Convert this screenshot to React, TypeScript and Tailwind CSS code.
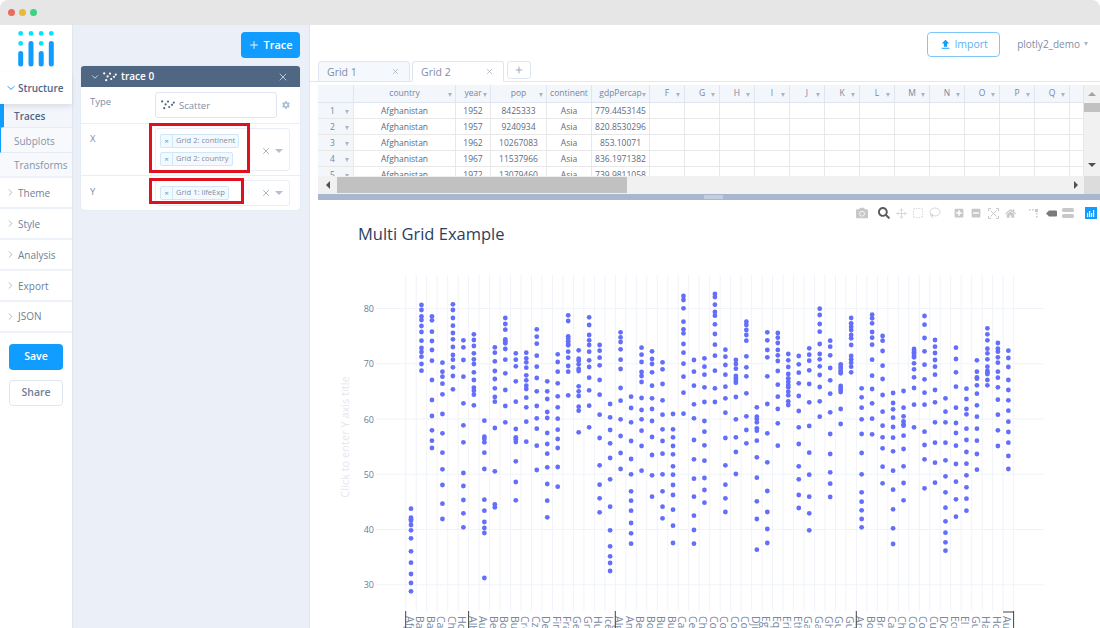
import { ChevronDown, ChevronRight, X, Plus, Move, SquareDashed, Lasso } from "lucide-react";
import { FaCamera, FaCog, FaHome, FaMinusSquare, FaPlusSquare, FaSearch } from "react-icons/fa";
import { MdFileUpload } from "react-icons/md";

const rows = [
  ["Afghanistan", "1952", "8425333", "Asia", "779.4453145"],
  ["Afghanistan", "1957", "9240934", "Asia", "820.8530296"],
  ["Afghanistan", "1962", "10267083", "Asia", "853.10071"],
  ["Afghanistan", "1967", "11537966", "Asia", "836.1971382"],
  ["Afghanistan", "1972", "13079460", "Asia", "739.9811058"],
];

const letters = ["F", "G", "H", "I", "J", "K", "L", "M", "N", "O", "P", "Q"];

const countries = [
  "Afghanistan", "Bahrain", "Bangladesh", "Cambodia", "China", "Hong Kong", "Albania", "Austria", "Belgium", "Bosnia",
  "Bulgaria", "Croatia", "Czech Republic", "Denmark", "Finland", "France", "Germany", "Greece", "Hungary", "Iceland",
  "Algeria", "Angola", "Benin", "Botswana", "Burkina Faso", "Burundi", "Cameroon", "Central African", "Chad", "Comoros",
  "Congo", "Congo", "Cote d'Ivoire", "Djibouti", "Egypt", "Equatorial", "Eritrea", "Ethiopia", "Gabon", "Gambia",
  "Ghana", "Guinea", "Guinea-Bissau", "Argentina", "Bolivia", "Brazil", "Canada", "Chile", "Colombia", "Costa Rica",
  "Cuba", "Dominican", "Ecuador", "El Salvador", "Guatemala", "Haiti", "Honduras", "Australia",
];

// y of each point per column, in 3x pixels below y=270
const points = [
  [716, 743, 748, 752, 765, 781, 805, 844, 878, 912, 939, 964],
  [105, 120, 139, 150, 168, 186, 212, 234, 246, 260, 282, 302],
  [139, 151, 185, 213, 240, 272, 330, 390, 438, 481, 512, 534],
  [278, 305, 320, 341, 373, 432, 490, 548, 598, 645, 701, 747],
  [103, 120, 144, 167, 189, 208, 231, 255, 269, 292, 318, 358],
  [211, 232, 270, 320, 400, 466, 517, 609, 648, 690, 730, 772],
  [193, 210, 228, 250, 268, 282, 307, 330, 353, 362, 374, 406],
  [452, 500, 507, 517, 548, 597, 689, 722, 756, 774, 789, 924],
  [232, 248, 274, 303, 327, 355, 381, 395, 474, 604, 703, 712],
  [144, 162, 179, 208, 214, 220, 237, 269, 310, 360, 408, 457],
  [250, 269, 289, 334, 395, 477, 502, 508, 516, 574, 636, 691],
  [248, 265, 277, 293, 316, 331, 347, 357, 383, 412, 455, 515],
  [178, 200, 221, 257, 290, 324, 364, 408, 445, 476, 527, 600],
  [334, 364, 387, 426, 444, 489, 522, 551, 592, 642, 692, 742],
  [253, 276, 305, 340, 379, 412, 446, 479, 507, 534, 591, 650],
  [136, 153, 199, 206, 214, 222, 226, 245, 263, 288, 305, 376],
  [241, 266, 272, 283, 297, 303, 349, 364, 378, 410, 422, 487],
  [142, 165, 195, 211, 225, 245, 271, 291, 323, 361, 407, 472],
  [225, 242, 263, 286, 330, 374, 434, 504, 586, 644, 685, 727],
  [402, 442, 480, 520, 564, 628, 710, 781, 829, 859, 879, 903],
  [187, 202, 216, 238, 269, 297, 354, 392, 448, 498, 549, 597],
  [380, 414, 457, 513, 567, 613, 664, 692, 722, 759, 790, 821],
  [233, 254, 276, 306, 318, 336, 384, 420, 448, 482, 528, 602],
  [244, 267, 282, 307, 347, 385, 417, 453, 501, 555, 616, 680],
  [277, 298, 342, 391, 434, 478, 513, 551, 613, 664, 710, 745],
  [432, 478, 502, 528, 553, 589, 614, 645, 675, 719, 767, 819],
  [78, 90, 115, 155, 178, 190, 222, 248, 281, 320, 368, 431],
  [270, 305, 347, 403, 445, 510, 568, 626, 680, 737, 780, 821],
  [265, 290, 314, 352, 396, 453, 485, 526, 572, 624, 660, 698],
  [72, 81, 104, 126, 137, 163, 192, 224, 257, 302, 355, 396],
  [239, 260, 285, 314, 350, 385, 428, 504, 586, 644, 685, 726],
  [270, 282, 296, 318, 325, 332, 338, 381, 448, 502, 546, 612],
  [155, 165, 180, 195, 212, 259, 292, 319, 370, 439, 480, 520],
  [412, 440, 447, 457, 475, 482, 512, 562, 623, 694, 747, 839],
  [187, 211, 240, 262, 319, 402, 490, 577, 663, 726, 777, 819],
  [189, 203, 219, 240, 256, 273, 303, 344, 380, 417, 460, 527],
  [252, 271, 291, 312, 325, 335, 345, 352, 365, 376, 394, 405],
  [258, 283, 308, 340, 378, 423, 472, 522, 589, 628, 675, 714],
  [235, 254, 272, 301, 342, 397, 468, 548, 614, 680, 730, 781],
  [116, 135, 162, 185, 222, 252, 268, 289, 315, 351, 394, 440],
  [212, 230, 256, 294, 331, 371, 427, 492, 552, 607, 641, 681],
  [283, 290, 297, 304, 310, 348, 354, 360, 366, 417, 462],
  [144, 160, 170, 180, 195, 205, 225, 258, 268, 278, 290, 307],
  [355, 382, 413, 448, 492, 549, 613, 667, 695, 721, 747, 772],
  [134, 145, 160, 186, 203, 224, 269, 317, 357, 400, 446, 493],
  [198, 212, 243, 287, 327, 375, 425, 467, 502, 535, 590, 640],
  [369, 399, 418, 443, 471, 503, 544, 602, 659, 718, 775, 822],
  [363, 413, 439, 454, 463, 467, 497, 537, 589, 639, 691],
  [237, 242, 247, 252, 257, 262, 280, 298, 322, 354, 404, 472],
  [138, 164, 204, 244, 284, 328, 368, 404, 485, 525, 568, 655],
  [210, 230, 249, 270, 290, 314, 360, 397, 457, 518, 578, 638],
  [385, 425, 457, 518, 571, 619, 667, 713, 754, 788, 817, 842],
  [233, 267, 307, 350, 413, 459, 489, 527, 582, 635, 688, 740],
  [356, 387, 417, 433, 476, 510, 546, 581, 616, 652, 686, 722],
  [271, 305, 322, 326, 346, 371, 406, 440, 476, 512, 552, 599],
  [175, 193, 211, 236, 250, 268, 290, 303, 308, 312, 330, 346],
  [219, 236, 245, 262, 278, 305, 323, 352, 389, 434, 481, 528],
  [242, 264, 291, 330, 360, 391, 422, 455, 486, 518, 558, 597],
];

const colX = (i: number) => 411 + i * 10.48;

const Caret = ({ className = "" }: { className?: string }) => (
  <div className={`w-0 h-0 border-x-[2.5px] border-t-[4px] border-x-transparent border-t-[#a9b5c6] ${className}`} />
);

const ScatterIcon = ({ color }: { color: string }) => (
  <svg width="14" height="10" viewBox="0 0 14 10" fill={color}>
    <circle cx="1.2" cy="1.4" r="1.1" />
    <circle cx="3.2" cy="8.2" r="1.1" />
    <circle cx="4.6" cy="4.4" r="1.1" />
    <circle cx="7" cy="1.6" r="1.1" />
    <circle cx="8.2" cy="7" r="1.1" />
    <circle cx="11" cy="4.8" r="1.1" />
    <circle cx="12.8" cy="2.6" r="1.1" />
  </svg>
);

const Tag = ({ label }: { label: string }) => (
  <div className="flex h-[14px] w-fit items-stretch border border-[#cfe8f9] bg-[#f3f9fe] rounded-[2px] text-[7.6px] text-[#7f8ea5]">
    <div className="w-[12px] border-r border-[#cfe8f9] flex items-center justify-center text-[#3f9de0] text-[8px]">×</div>
    <div className="px-[3px] flex items-center whitespace-nowrap">{label}</div>
  </div>
);

const NavRow = ({ label }: { label: string }) => (
  <div className="h-[31px] flex items-center border-b-2 border-[#eef2f9] text-[#6f7f97] text-[10px] font-medium pl-[5px] gap-[2px]">
    <ChevronRight size={11} strokeWidth={1.5} className="text-[#8d9bb0] -mt-[1px]" />
    <span className="pt-[2px]">{label}</span>
  </div>
);

const Logo = () => (
  <svg width="40" height="38" viewBox="16 31 40 38">
    {[20.7, 31, 41.2, 51.3].map((x) => (
      <circle key={x} cx={x} cy="33.4" r="2.4" fill="#00e5ff" />
    ))}
    <circle cx="20.7" cy="43.4" r="2.4" fill="#00e5ff" />
    <circle cx="41.2" cy="43.4" r="2.4" fill="#00e5ff" />
    <rect x="18.2" y="51" width="5" height="15.5" rx="2.5" fill="#119dff" />
    <rect x="28.5" y="41" width="5" height="25.5" rx="2.5" fill="#119dff" />
    <rect x="38.7" y="51" width="5" height="15.5" rx="2.5" fill="#119dff" />
    <rect x="48.8" y="41" width="5" height="25.5" rx="2.5" fill="#119dff" />
  </svg>
);

const Sidebar = () => (
  <div className="w-[73px] shrink-0 bg-white border-r border-[#dfe6f2] flex flex-col">
    <div className="h-[47px] pt-[6px] pl-[16px]">
      <Logo />
    </div>
    <div className="h-[32px] flex items-center text-[#506784] text-[10px] font-semibold pl-[5px] gap-[1px] shadow-[0_3px_5px_rgba(80,103,132,0.15)] z-10">
      <ChevronDown size={12} strokeWidth={2} className="text-[#119dff]" />
      Structure
    </div>
    <div className="h-[24px] flex items-center bg-[#f3f6fb] border-l-[4px] border-[#119dff] border-b border-b-[#e6ecf5] pl-[10px] pt-[2px] text-[10px] font-semibold text-[#506784]">
      Traces
    </div>
    <div className="h-[25px] flex items-center bg-[#f7f9fc] border-l border-[#119dff] border-b border-b-[#e6ecf5] pl-[13px] pt-[2px] text-[10px] text-[#8594aa]">
      Subplots
    </div>
    <div className="h-[25px] flex items-center bg-[#f7f9fc] border-b-2 border-[#eef2f9] pl-[14px] pt-[2px] text-[10px] text-[#8594aa]">
      Transforms
    </div>
    <NavRow label="Theme" />
    <NavRow label="Style" />
    <NavRow label="Analysis" />
    <NavRow label="Export" />
    <div className="h-[31px] flex items-center border-b-2 border-[#eef2f9] text-[#6f7f97] text-[10px] font-medium pl-[5px] gap-[2px]">
      <ChevronRight size={11} strokeWidth={1.5} className="text-[#8d9bb0]" />
      JSON
    </div>
    <button className="mt-[11px] ml-[9px] w-[54px] h-[26px] rounded-[4px] bg-[#119dff] text-white text-[10.5px] font-semibold pb-[1px]">
      Save
    </button>
    <button className="mt-[10px] ml-[9px] w-[54px] h-[26px] rounded-[4px] bg-white border border-[#dfe6f2] text-[#6f7f97] text-[10.5px] font-semibold">
      Share
    </button>
  </div>
);

const ClearCaret = () => (
  <div className="flex items-center gap-[4px]">
    <X size={10} strokeWidth={1.5} className="text-[#7d8ba0]" />
    <div className="w-0 h-0 border-x-[4px] border-t-[4px] border-x-transparent border-t-[#b4bfcf]" />
  </div>
);

const TracePanel = () => (
  <div className="w-[237px] shrink-0 bg-[#ebf0f8] border-r border-[#dfe6f2] pt-[7px] pl-[8px] pr-[9px]">
    <div className="flex justify-end">
      <button className="w-[59px] h-[26px] rounded-[4px] bg-[#119dff] text-white text-[11px] font-semibold flex items-center justify-center gap-[3px]">
        <Plus size={12} strokeWidth={1.75} />
        Trace
      </button>
    </div>
    <div className="mt-[8px] rounded-[3px] bg-white shadow-[0_0_1px_rgba(80,103,132,0.3)]">
      <div className="h-[21px] bg-[#506784] rounded-t-[3px] flex items-center pl-[9px] pr-[11px] text-white text-[10px] font-semibold">
        <ChevronDown size={10} strokeWidth={2} className="text-[#dfe6f2]" />
        <div className="ml-[3px] mr-[4px]">
          <ScatterIcon color="#ffffff" />
        </div>
        trace 0
        <X size={12} strokeWidth={1.5} className="ml-auto text-[#dfe6f2]" />
      </div>
      <div className="h-[37px] border-b border-[#e9eef6] flex items-center">
        <div className="w-[74px] pl-[9px] text-[9.5px] text-[#7f8ea5] self-start pt-[8px]">Type</div>
        <div className="w-[122px] h-[26px] border border-[#dfe6f2] rounded-[3px] flex items-center pl-[5px] gap-[4px] text-[9.5px] text-[#7f8ea5]">
          <ScatterIcon color="#506784" />
          <span className="pt-[2px]">Scatter</span>
        </div>
        <FaCog size={8} className="ml-[5px] text-[#a9bdd6]" />
      </div>
      <div className="h-[52px] border-b border-[#e9eef6] flex items-center">
        <div className="w-[74px] pl-[9px] text-[9.5px] text-[#7f8ea5] self-start pt-[8px]">X</div>
        <div className="relative w-[135px] h-[43px] border border-[#e9eef6] rounded-[3px] flex items-center pl-[4px]">
          <div className="flex flex-col gap-[4px]">
            <Tag label="Grid 2: continent" />
            <Tag label="Grid 2: country" />
          </div>
          <div className="ml-auto mr-[6px] mt-[2px]">
            <ClearCaret />
          </div>
          <div className="absolute left-[-7px] top-[-6px] w-[101px] h-[50px] border-[3px] border-[#e0111f]" />
        </div>
      </div>
      <div className="h-[34px] flex items-center">
        <div className="w-[74px] pl-[9px] text-[9.5px] text-[#7f8ea5] self-start pt-[9px]">Y</div>
        <div className="relative w-[135px] h-[26px] border border-[#e9eef6] rounded-[3px] flex items-center pl-[4px]">
          <Tag label="Grid 1: lifeExp" />
          <div className="ml-auto mr-[6px]">
            <ClearCaret />
          </div>
          <div className="absolute left-[-7px] top-[-3px] w-[95px] h-[26px] border-[3px] border-[#e0111f]" />
        </div>
      </div>
    </div>
  </div>
);

const GridTab = ({ label, active }: { label: string; active?: boolean }) => (
  <div
    className={`w-[92px] h-[21px] border border-[#dfe6f2] rounded-t-[3px] flex items-center justify-between pl-[8px] pr-[9px] text-[10.5px] text-[#7f8ea5] ${
      active ? "bg-white border-b-white" : "bg-[#f5f8fc]"
    }`}
  >
    <span className="pt-[2px]">{label}</span>
    <X size={9} strokeWidth={1.5} className="text-[#8d9bb0]" />
  </div>
);

const headCell = "relative h-[18px] flex items-center justify-center bg-[#f3f6fb] border-r border-b border-[#dfe6f2] text-[8.5px] text-[#7687a0]";
const bodyCell = "h-[16px] pt-[1px] flex items-center justify-center border-r border-b border-[#e8e8e8] text-[8.5px] text-[#5c6a7f] whitespace-nowrap";

const Table = () => (
  <div className="ml-[8px] h-[118px] shrink-0 flex flex-col">
    <div className="flex h-[91px] mt-[3px]">
      <div className="w-[766px] h-[91px] overflow-hidden">
        <div className="grid grid-cols-[36px_102px_35px_56px_45px_58px_repeat(12,35px)_14px]">
          <div className={headCell} />
          {["country", "year", "pop", "continent", "gdpPercap"].map((h) => (
            <div key={h} className={headCell}>
              {h}
              {h !== "continent" && <Caret className="absolute right-[3px] top-[8px]" />}
            </div>
          ))}
          {letters.map((l) => (
            <div key={l} className={headCell}>
              {l}
              <Caret className="absolute right-[4px] top-[8px]" />
            </div>
          ))}
          <div className={headCell} />
          {rows.map((r, i) => (
            <div key={i} className="contents">
              <div className={`${bodyCell} relative bg-[#f3f6fb] text-[#7687a0] pr-[6px]`}>
                {i + 1}
                <Caret className="absolute right-[4px] top-[7px]" />
              </div>
              {r.map((c, j) => (
                <div key={j} className={bodyCell}>
                  {c}
                </div>
              ))}
              {letters.map((l) => (
                <div key={l} className={bodyCell} />
              ))}
              <div className={bodyCell} />
            </div>
          ))}
        </div>
      </div>
      <div className="w-[16px] h-[91px] bg-[#f1f1f1] flex flex-col items-center">
        <div className="h-[18px] flex items-center">
          <div className="w-0 h-0 border-x-[4px] border-b-[4px] border-x-transparent border-b-[#a3a3a3]" />
        </div>
        <div className="w-full h-[9px] bg-[#c1c1c1]" />
        <div className="mt-[51px] w-0 h-0 border-x-[4px] border-t-[4px] border-x-transparent border-t-[#505050]" />
      </div>
    </div>
    <div className="flex h-[18px] bg-[#f1f1f1] items-center">
      <div className="w-[19px] flex justify-center">
        <div className="w-0 h-0 border-y-[4px] border-r-[4px] border-y-transparent border-r-[#505050]" />
      </div>
      <div className="w-[290px] h-[16px] bg-[#c1c1c1]" />
      <div className="w-[457px] flex justify-end pr-[6px]">
        <div className="w-0 h-0 border-y-[4px] border-l-[4px] border-y-transparent border-l-[#505050]" />
      </div>
      <div className="w-[16px] h-full bg-[#dcdcdc]" />
    </div>
    <div className="h-[6px] bg-[#a8b7cf] flex justify-center items-center shrink-0">
      <div className="ml-[9px] w-[19px] h-[4px] bg-[#c3cede]" />
    </div>
  </div>
);

const Modebar = () => (
  <div className="absolute top-[7px] right-[3px] flex items-center text-[#c8c8c8]">
    <FaCamera size={12} />
    <FaSearch size={12} className="ml-[10px] text-[#5a5a5a]" />
    <Move size={11} strokeWidth={1.5} className="ml-[6px]" />
    <SquareDashed size={12} strokeWidth={1.5} className="ml-[5px]" />
    <Lasso size={12} strokeWidth={1.5} className="ml-[5px]" />
    <FaPlusSquare size={10} className="ml-[13px]" />
    <FaMinusSquare size={10} className="ml-[7px]" />
    <svg width="11" height="11" viewBox="0 0 11 11" fill="none" stroke="currentColor" className="ml-[7px]">
      <path d="M0.5 3V0.5H3M8 0.5H10.5V3M10.5 8V10.5H8M3 10.5H0.5V8M2.5 2.5L8.5 8.5M8.5 2.5L2.5 8.5" />
    </svg>
    <FaHome size={11} className="ml-[6px]" />
    <svg width="10" height="10" viewBox="0 0 10 10" fill="currentColor" className="ml-[13px]">
      <rect x="0" y="1" width="1.5" height="1.5" />
      <rect x="3" y="1" width="1.5" height="1.5" />
      <rect x="6" y="1" width="3" height="3" />
      <rect x="7" y="5" width="1.5" height="1.5" />
      <rect x="7" y="8" width="1.5" height="1.5" />
    </svg>
    <svg width="11" height="7" viewBox="0 0 11 7" fill="#7a7a7a" className="ml-[7px]">
      <path d="M0 3.5L3 0.5H10a1 1 0 0 1 1 1V5.5a1 1 0 0 1-1 1H3Z" />
    </svg>
    <svg width="12" height="10" viewBox="0 0 12 10" fill="currentColor" className="ml-[5px]">
      <rect x="0" y="0" width="12" height="4" rx="1.5" />
      <rect x="0" y="6" width="12" height="4" rx="1.5" />
    </svg>
    <svg width="12" height="12" viewBox="0 0 12 12" className="ml-[11px]">
      <rect width="12" height="12" fill="#119dff" />
      <rect x="2" y="6" width="1.2" height="4" fill="#fff" />
      <rect x="4" y="4" width="1.2" height="6" fill="#fff" />
      <rect x="6" y="6" width="1.2" height="4" fill="#fff" />
      <rect x="8" y="3" width="1.2" height="7" fill="#fff" />
    </svg>
  </div>
);

const Chart = () => (
  <div className="relative flex-1 overflow-hidden bg-white">
    <Modebar />
    <svg width="790" height="428" viewBox="310 200 790 428" className="block" fontFamily="'Open Sans', sans-serif">
      <text x="358" y="240" fontSize="16.5" fill="#2a3f5f">
        Multi Grid Example
      </text>
      {[80, 70, 60, 50, 40, 30].map((v, i) => {
        const y = 308.5 + i * 55.25;
        return (
          <g key={v}>
            <line x1="376" x2="1044" y1={y} y2={y} stroke="#f0f3fa" />
            <text x="374" y={y + 3.5} fontSize="9" textAnchor="end" fill="#6b7d96">
              {v}
            </text>
          </g>
        );
      })}
      {countries.map((_, i) => (
        <line key={i} x1={colX(i) - 5.24} x2={colX(i) - 5.24} y1="275" y2="611" stroke="#f0f3fa" />
      ))}
      <line x1="1013.6" x2="1013.6" y1="275" y2="611" stroke="#f0f3fa" />
      <text transform="translate(349,437) rotate(-90)" fontSize="11" textAnchor="middle" fill="#e4e7ee">
        Click to enter Y axis title
      </text>
      {points.map((col, i) =>
        col.map((z, j) => <circle key={j} cx={colX(i)} cy={270 + z / 3} r="2.4" fill="#636efa" />)
      )}
      {countries.map((c, i) => (
        <text key={i} transform={`translate(${colX(i) - 1.5},616) rotate(90)`} dy="0.35em" fontSize="10.5" fill="#7687a0">
          {c}
        </text>
      ))}
      {[405.7, 468.6, 615.3, 856.3, 1013.6].map((x) => (
        <line key={x} x1={x} x2={x} y1="611" y2="628" stroke="#444" />
      ))}
      <line x1="1003" x2="1013.6" y1="612" y2="612" stroke="#444" />
    </svg>
  </div>
);

const App = () => {
  return (
    <div className="w-[1100px] h-[628px] overflow-hidden bg-white flex flex-col font-['Open_Sans',sans-serif]">
      <div className="h-[25px] shrink-0 bg-[#e6e6e6] rounded-t-[8px] flex items-center pl-[8px] gap-[4px]">
        <div className="w-[7px] h-[7px] rounded-full bg-[#ec6a5e]" />
        <div className="w-[7px] h-[7px] rounded-full bg-[#e8b93f]" />
        <div className="w-[7px] h-[7px] rounded-full bg-[#3dd37f]" />
      </div>
      <div className="flex flex-1 min-h-0">
        <Sidebar />
        <TracePanel />
        <div className="flex-1 min-w-0 flex flex-col">
          <div className="h-[36px] shrink-0 flex items-center justify-end pr-[12px] pt-[2px]">
            <button className="w-[73px] h-[25px] rounded-[4px] border border-[#7fc6fb] text-[#58b3f7] text-[10.5px] flex items-center justify-center gap-[2px]">
              <MdFileUpload size={13} className="text-[#119dff]" />
              <span className="pt-[2px]">Import</span>
            </button>
            <div className="ml-[17px] flex items-center gap-[4px] text-[10px] text-[#7f8ea5]">
              plotly2_demo
              <Caret className="border-t-[#7f8ea5]" />
            </div>
          </div>
          <div className="h-[21px] shrink-0 pl-[8px] flex gap-[2px] border-b border-[#dfe6f2]">
            <GridTab label="Grid 1" />
            <GridTab label="Grid 2" active />
            <div className="ml-[1px] w-[24px] h-[18px] border border-[#dfe6f2] rounded-[3px] flex items-center justify-center text-[#8d9bb0]">
              <Plus size={10} strokeWidth={2} />
            </div>
          </div>
          <Table />
          <Chart />
        </div>
      </div>
    </div>
  );
};

export default App;
